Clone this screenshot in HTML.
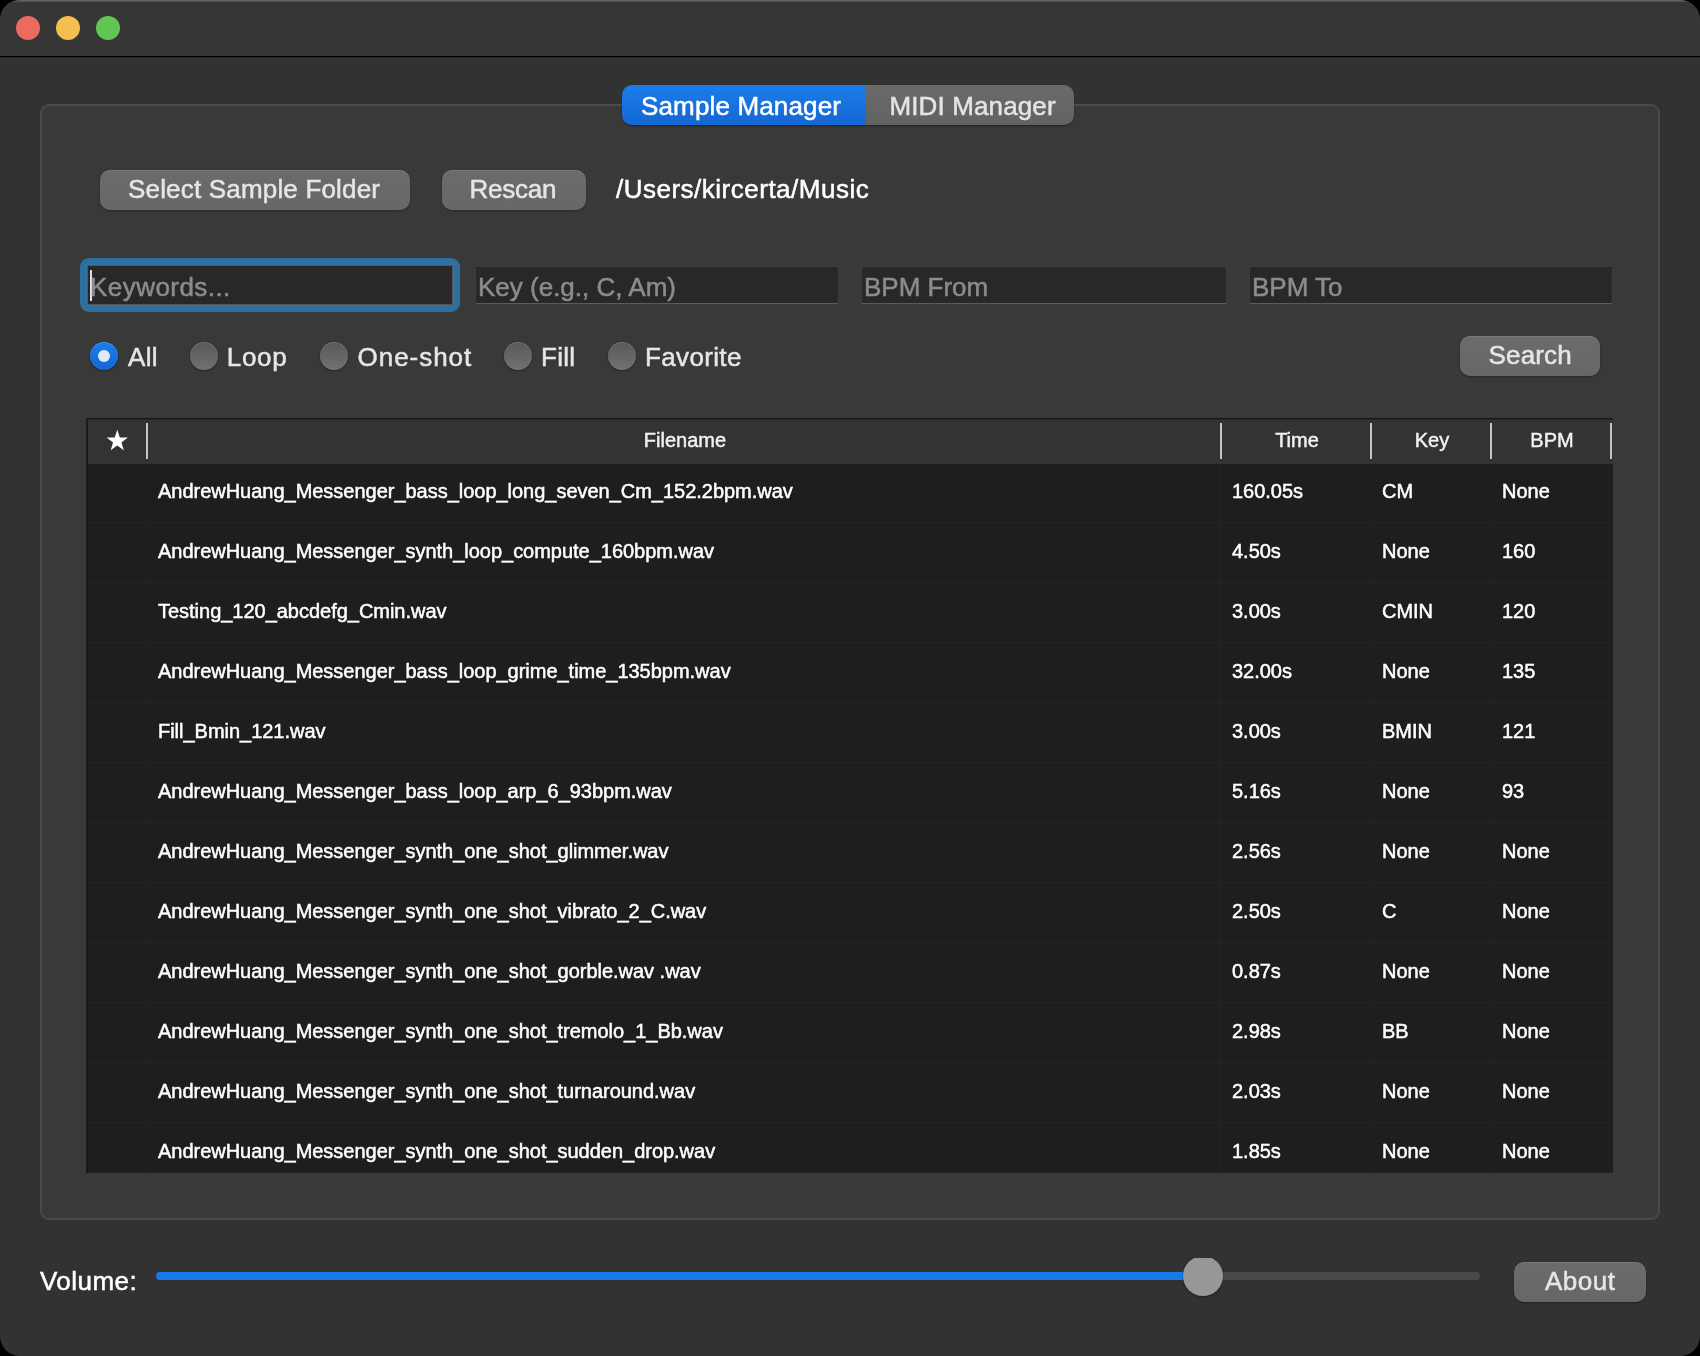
<!DOCTYPE html>
<html>
<head>
<meta charset="utf-8">
<title>Sample Manager</title>
<style>
html,body{margin:0;padding:0;background:#000;}
body{width:1700px;height:1356px;overflow:hidden;font-family:"Liberation Sans",sans-serif;}
#win{will-change:transform;position:absolute;left:0;top:0;width:1700px;height:1356px;background:#323232;border-radius:20px;overflow:hidden;}
#titlebar{position:absolute;left:0;top:0;width:1700px;height:56px;background:#363636;}
#tb-hi{position:absolute;left:0;top:0;width:1700px;height:2px;background:linear-gradient(#6a6a6a,#4a4a4a);}
#tb-line{position:absolute;left:0;top:56px;width:1700px;height:1px;background:#000;}
#tb-line2{position:absolute;left:0;top:57px;width:1700px;height:1px;background:#2a2a2a;}
.tl{position:absolute;top:16px;width:24px;height:24px;border-radius:50%;}
.abs{position:absolute;}
.t{position:absolute;white-space:pre;font-size:26px;line-height:30px;height:30px;color:#e6e6e6;-webkit-text-stroke:0.5px currentColor;}
#panel{position:absolute;left:40px;top:104px;width:1616px;height:1112px;border:2px solid #4a4a4a;border-radius:9px;background:#393939;}
.btn{position:absolute;background:linear-gradient(#6b6b6b,#676767);border-radius:10px;box-shadow:0 1px 2px rgba(0,0,0,.35), inset 0 1px 0 rgba(255,255,255,.10);}
.inp{position:absolute;background:#282828;height:37px;border-bottom:1px solid #5c5c5c;box-sizing:border-box;box-shadow:0 0 0 1px rgba(255,255,255,.025);}
.ph{color:#8c8c8c;}
.radio{position:absolute;width:28px;height:28px;border-radius:50%;background:linear-gradient(#585858,#727272);box-shadow:0 1px 2px rgba(0,0,0,.35), 0 0 1px rgba(0,0,0,.5), inset 0 1px 0 rgba(255,255,255,.16);}
#table{position:absolute;left:86px;top:418px;width:1527px;height:755px;background:#1e1e1e;overflow:hidden;}
#thead{position:absolute;left:2px;top:2px;width:1525px;height:44px;background:#333333;}
.sep{position:absolute;top:3px;width:2px;height:36px;background:#c4c4c4;}
.th{position:absolute;font-size:20px;line-height:24px;height:24px;top:8px;color:#f2f2f2;white-space:pre;text-align:center;-webkit-text-stroke:0.45px currentColor;}
.row{position:absolute;left:2px;width:1523px;height:58px;border-bottom:1px solid #242424;}
.c{position:absolute;top:15px;font-size:20px;line-height:24px;height:24px;color:#ffffff;white-space:pre;letter-spacing:-0.02px;-webkit-text-stroke:0.5px currentColor;}
.vg{position:absolute;top:46px;width:1px;height:720px;background:#242424;}
</style>
</head>
<body>
<div id="win">
  <div id="titlebar"></div>
  <div id="tb-hi"></div>
  <div id="tb-line"></div>
  <div id="tb-line2"></div>
  <div class="tl" style="left:16px;background:#ec6a5e;"></div>
  <div class="tl" style="left:56px;background:#f4bf4f;"></div>
  <div class="tl" style="left:96px;background:#61c554;"></div>

  <div id="panel"></div>

  <!-- tabs -->
  <div class="abs" style="left:622px;top:85px;width:452px;height:40px;border-radius:10px;overflow:hidden;box-shadow:0 1px 2px rgba(0,0,0,.4);">
    <div class="abs" style="left:0;top:0;width:244px;height:40px;background:linear-gradient(#1b7de9,#1467d2);"></div>
    <div class="abs" style="left:244px;top:0;width:208px;height:40px;background:linear-gradient(#6a6a6a,#626262);"></div>
  </div>
  <div class="t" style="left:641px;top:91px;color:#ffffff;letter-spacing:0.15px;">Sample Manager</div>
  <div class="t" style="left:889.5px;top:91px;color:#e4e4e4;letter-spacing:0.12px;">MIDI Manager</div>

  <!-- buttons row -->
  <div class="btn" style="left:100px;top:170px;width:310px;height:40px;"></div>
  <div class="t" style="left:128px;top:174px;letter-spacing:0.18px;">Select Sample Folder</div>
  <div class="btn" style="left:442px;top:170px;width:144px;height:40px;"></div>
  <div class="t" style="left:469.5px;top:174px;letter-spacing:-0.25px;">Rescan</div>
  <div class="t" style="left:616px;top:174px;color:#ffffff;letter-spacing:0.5px;">/Users/kircerta/Music</div>

  <!-- inputs -->
  <div class="abs" style="left:80px;top:258px;width:380px;height:54px;border-radius:9px;background:#2c719e;"></div>
  <div class="inp" style="left:87px;top:265px;width:366px;height:40px;border:1px solid #555;"></div>
  <div class="abs" style="left:90px;top:270px;width:2px;height:31px;background:#e0e0e0;"></div>
  <div class="t ph" style="left:90px;top:272px;letter-spacing:0.45px;">Keywords...</div>

  <div class="inp" style="left:476px;top:267px;width:362px;"></div>
  <div class="t ph" style="left:478px;top:272px;">Key (e.g., C, Am)</div>
  <div class="inp" style="left:862px;top:267px;width:364px;"></div>
  <div class="t ph" style="left:864px;top:272px;">BPM From</div>
  <div class="inp" style="left:1250px;top:267px;width:362px;"></div>
  <div class="t ph" style="left:1252px;top:272px;">BPM To</div>

  <!-- radios -->
  <div class="radio" style="left:90px;top:342px;background:linear-gradient(#1b7de9,#1467d2);"></div>
  <div class="abs" style="left:98px;top:350px;width:12px;height:12px;border-radius:50%;background:#dbe9fb;"></div>
  <div class="t" style="left:128px;top:342px;letter-spacing:0.3px;">All</div>
  <div class="radio" style="left:190px;top:342px;"></div>
  <div class="t" style="left:226.7px;top:342px;letter-spacing:0.75px;">Loop</div>
  <div class="radio" style="left:320px;top:342px;"></div>
  <div class="t" style="left:357.6px;top:342px;letter-spacing:0.95px;">One-shot</div>
  <div class="radio" style="left:504px;top:342px;"></div>
  <div class="t" style="left:541px;top:342px;letter-spacing:0.3px;">Fill</div>
  <div class="radio" style="left:608px;top:342px;"></div>
  <div class="t" style="left:645px;top:342px;letter-spacing:0.35px;">Favorite</div>

  <div class="btn" style="left:1460px;top:336px;width:140px;height:40px;"></div>
  <div class="t" style="left:1488.6px;top:340px;letter-spacing:0.15px;">Search</div>

  <!-- table -->
  <div id="table">
    <div class="abs" style="left:0;top:0;width:1527px;height:1px;background:#1a1a1a;"></div><div class="abs" style="left:0;top:1px;width:1527px;height:1px;background:#262626;"></div>
    <div class="abs" style="left:0;top:0;width:2px;height:755px;background:#1a1a1a;"></div>
    <div id="thead">
      <div class="sep" style="left:58px;"></div>
      <div class="sep" style="left:1132px;"></div>
      <div class="sep" style="left:1282px;"></div>
      <div class="sep" style="left:1402px;"></div>
      <div class="sep" style="left:1522px;"></div>
      <svg class="abs" style="left:18.3px;top:8.6px;" width="22.5" height="22.5" viewBox="0 0 22 22"><polygon fill="#ffffff" points="11,0.8 13.5,8.3 21.4,8.4 15.1,13.1 17.4,20.7 11,16.1 4.6,20.7 6.9,13.1 0.6,8.4 8.5,8.3"/></svg>
      <div class="th" style="left:61px;width:1072px;">Filename</div>
      <div class="th" style="left:1135px;width:148px;">Time</div>
      <div class="th" style="left:1285px;width:118px;">Key</div>
      <div class="th" style="left:1405px;width:118px;">BPM</div>
    </div>
    <div class="vg" style="left:60px;"></div>
    <div class="vg" style="left:1134px;"></div>
    <div class="vg" style="left:1284px;"></div>
    <div class="vg" style="left:1404px;"></div>
    <div id="rows">
    <div class="row" style="top:46px;"><div class="c" style="left:70px;">AndrewHuang_Messenger_bass_loop_long_seven_Cm_152.2bpm.wav</div><div class="c" style="left:1144px;">160.05s</div><div class="c" style="left:1294px;">CM</div><div class="c" style="left:1414px;">None</div></div>
    <div class="row" style="top:106px;"><div class="c" style="left:70px;">AndrewHuang_Messenger_synth_loop_compute_160bpm.wav</div><div class="c" style="left:1144px;">4.50s</div><div class="c" style="left:1294px;">None</div><div class="c" style="left:1414px;">160</div></div>
    <div class="row" style="top:166px;"><div class="c" style="left:70px;">Testing_120_abcdefg_Cmin.wav</div><div class="c" style="left:1144px;">3.00s</div><div class="c" style="left:1294px;">CMIN</div><div class="c" style="left:1414px;">120</div></div>
    <div class="row" style="top:226px;"><div class="c" style="left:70px;">AndrewHuang_Messenger_bass_loop_grime_time_135bpm.wav</div><div class="c" style="left:1144px;">32.00s</div><div class="c" style="left:1294px;">None</div><div class="c" style="left:1414px;">135</div></div>
    <div class="row" style="top:286px;"><div class="c" style="left:70px;">Fill_Bmin_121.wav</div><div class="c" style="left:1144px;">3.00s</div><div class="c" style="left:1294px;">BMIN</div><div class="c" style="left:1414px;">121</div></div>
    <div class="row" style="top:346px;"><div class="c" style="left:70px;">AndrewHuang_Messenger_bass_loop_arp_6_93bpm.wav</div><div class="c" style="left:1144px;">5.16s</div><div class="c" style="left:1294px;">None</div><div class="c" style="left:1414px;">93</div></div>
    <div class="row" style="top:406px;"><div class="c" style="left:70px;">AndrewHuang_Messenger_synth_one_shot_glimmer.wav</div><div class="c" style="left:1144px;">2.56s</div><div class="c" style="left:1294px;">None</div><div class="c" style="left:1414px;">None</div></div>
    <div class="row" style="top:466px;"><div class="c" style="left:70px;">AndrewHuang_Messenger_synth_one_shot_vibrato_2_C.wav</div><div class="c" style="left:1144px;">2.50s</div><div class="c" style="left:1294px;">C</div><div class="c" style="left:1414px;">None</div></div>
    <div class="row" style="top:526px;"><div class="c" style="left:70px;">AndrewHuang_Messenger_synth_one_shot_gorble.wav .wav</div><div class="c" style="left:1144px;">0.87s</div><div class="c" style="left:1294px;">None</div><div class="c" style="left:1414px;">None</div></div>
    <div class="row" style="top:586px;"><div class="c" style="left:70px;">AndrewHuang_Messenger_synth_one_shot_tremolo_1_Bb.wav</div><div class="c" style="left:1144px;">2.98s</div><div class="c" style="left:1294px;">BB</div><div class="c" style="left:1414px;">None</div></div>
    <div class="row" style="top:646px;"><div class="c" style="left:70px;">AndrewHuang_Messenger_synth_one_shot_turnaround.wav</div><div class="c" style="left:1144px;">2.03s</div><div class="c" style="left:1294px;">None</div><div class="c" style="left:1414px;">None</div></div>
    <div class="row" style="top:706px;"><div class="c" style="left:70px;">AndrewHuang_Messenger_synth_one_shot_sudden_drop.wav</div><div class="c" style="left:1144px;">1.85s</div><div class="c" style="left:1294px;">None</div><div class="c" style="left:1414px;">None</div></div>
    </div>
  </div>

  <!-- bottom -->
  <div class="t" style="left:40px;top:1266px;color:#ffffff;letter-spacing:0.45px;">Volume:</div>
  <div class="abs" style="left:156px;top:1272px;width:1324px;height:8px;border-radius:4px;background:#484848;"></div>
  <div class="abs" style="left:156px;top:1272px;width:1050px;height:8px;border-radius:4px;background:#187ae6;"></div>
  <div class="abs" style="left:1177px;top:1258px;width:52px;height:46px;overflow:hidden;"><div class="abs" style="left:6px;top:-2px;width:40px;height:40px;border-radius:50%;background:#979797;box-shadow:0 1px 2px rgba(0,0,0,.35),0 0 1px rgba(0,0,0,.4);"></div></div>
  <div class="btn" style="left:1514px;top:1262px;width:132px;height:40px;"></div>
  <div class="t" style="left:1545px;top:1266px;letter-spacing:0.5px;">About</div>
</div>
</body>
</html>
